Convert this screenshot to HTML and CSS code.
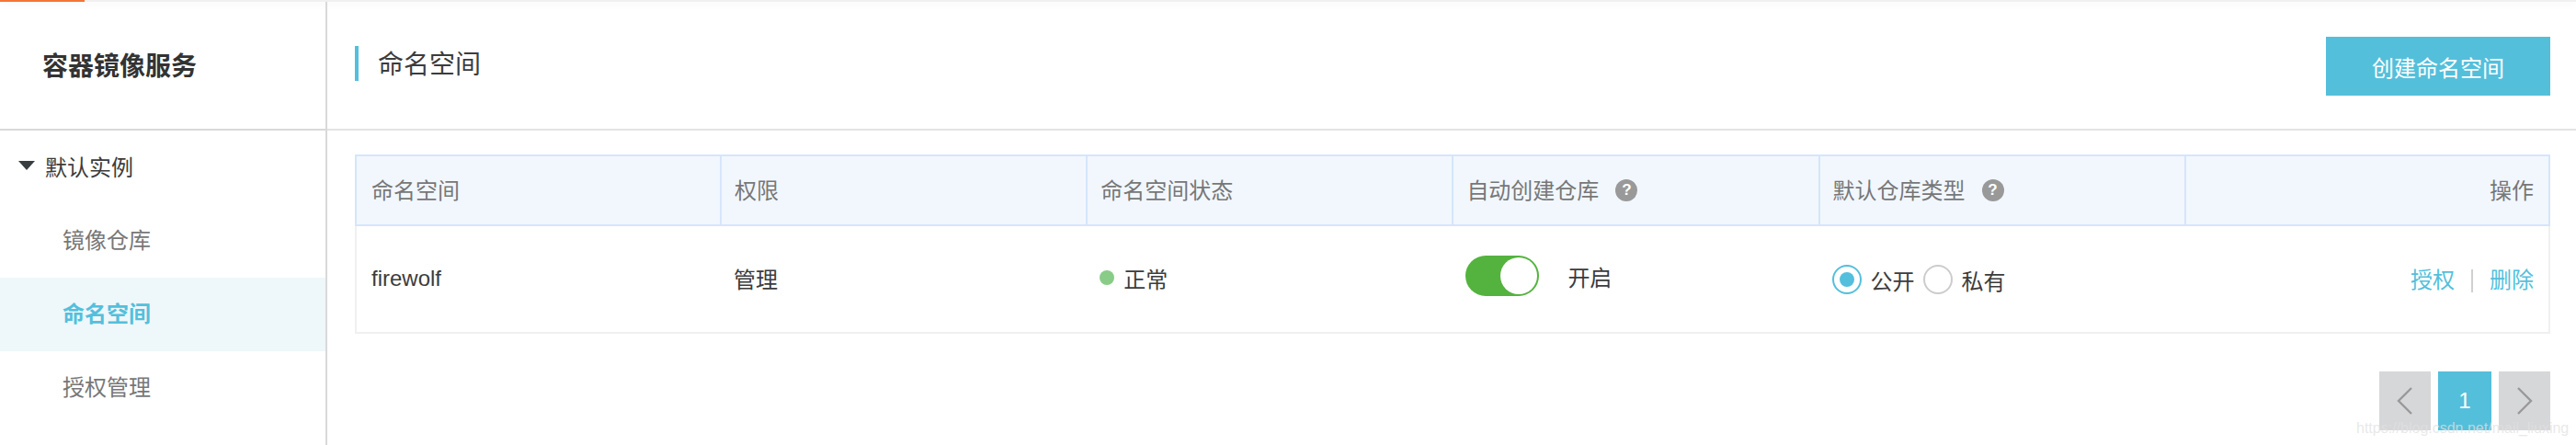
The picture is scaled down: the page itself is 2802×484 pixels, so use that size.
FILE: index.html
```html
<!DOCTYPE html>
<html lang="zh-CN">
<head>
<meta charset="UTF-8" />
<title>容器镜像服务 - 命名空间</title>
<link rel="stylesheet" href="styles.css">
</head>
<body>

<div class="top-strip"><div class="top-progress"></div></div>

<div class="layout">
  <aside class="sidebar">
    <div class="sidebar-title">容器镜像服务</div>
    <div class="sidebar-group"><span class="caret"></span>默认实例</div>
    <a class="sidebar-item">镜像仓库</a>
    <a class="sidebar-item active">命名空间</a>
    <a class="sidebar-item">授权管理</a>
  </aside>

  <main class="main">
    <header class="page-head">
      <h1 class="page-title">命名空间</h1>
      <button class="btn-create">创建命名空间</button>
    </header>

    <section class="content">
      <table class="ns-table">
        <thead>
          <tr>
            <th>命名空间</th>
            <th>权限</th>
            <th>命名空间状态</th>
            <th>自动创建仓库<span class="help">?</span></th>
            <th>默认仓库类型<span class="help">?</span></th>
            <th class="right">操作</th>
          </tr>
        </thead>
        <tbody>
          <tr>
            <td>firewolf</td>
            <td>管理</td>
            <td><span class="status"><span class="status-dot"></span>正常</span></td>
            <td>
              <span class="switch-wrap">
                <span class="switch"><span class="switch-knob"></span></span>
                开启
              </span>
            </td>
            <td>
              <span class="radios">
                <span class="radio checked"></span><span class="radio-label">公开</span>
                <span class="radio"></span><span class="radio-label">私有</span>
              </span>
            </td>
            <td class="right">
              <a class="link">授权</a><span class="sep"></span><a class="link">删除</a>
            </td>
          </tr>
        </tbody>
      </table>

      <div class="pager">
        <button class="page-btn">
          <svg width="18" height="32" viewBox="0 0 18 32"><path d="M16 2 2 16l14 14" fill="none" stroke="#999" stroke-width="2.4"/></svg>
        </button>
        <button class="page-btn current">1</button>
        <button class="page-btn">
          <svg width="18" height="32" viewBox="0 0 18 32"><path d="M2 2l14 14L2 30" fill="none" stroke="#999" stroke-width="2.4"/></svg>
        </button>
      </div>
    </section>
  </main>
</div>

<div class="watermark">https://blog.csdn.net/mail_liuxing</div>

</body>
</html>
```

FILE: styles.css
```css
* {
  box-sizing: border-box;
}
html, body {
  margin: 0;
  padding: 0;
  height: 484px;
  overflow: hidden;
  background: #fff;
  color: #333;
  font-family: "Liberation Sans", "Noto Sans CJK SC", sans-serif;
  font-size: 24px;
}
.top-strip {
  height: 2px;
  background: #f0f0f0;
  box-shadow: 0 2px 8px rgba(0,0,0,0.08);
}
.top-progress {
  width: 92px;
  height: 2px;
  background: #f47536;
}
.layout {
  display: flex;
  height: 482px;
}

/* sidebar */
.sidebar {
  width: 356px;
  flex: none;
  border-right: 2px solid #d9d9d9;
}
.sidebar-title {
  height: 140px;
  padding-left: 46px;
  line-height: 142px;
  font-size: 28px;
  font-weight: 700;
  color: #333;
  border-bottom: 2px solid #d9d9d9;
}
.sidebar-group {
  display: flex;
  align-items: center;
  height: 80px;
  padding-left: 20px;
  padding-bottom: 4px;
  color: #3c3c3c;
}
.caret {
  width: 0;
  height: 0;
  margin-right: 11px;
  border-left: 9.5px solid transparent;
  border-right: 9.5px solid transparent;
  border-top: 10px solid #373d41;
}
.sidebar-item {
  display: block;
  height: 80px;
  padding-left: 68px;
  line-height: 80px;
  color: #777;
}
.sidebar-item.active {
  background: #eef7fa;
  color: #54bfdc;
  font-weight: 700;
}

/* page head */
.main {
  flex: 1;
  min-width: 0;
}
.page-head {
  display: flex;
  align-items: flex-start;
  justify-content: space-between;
  height: 140px;
  padding: 38px 28px 0 30px;
  border-bottom: 2px solid #e3e3e3;
}
.page-title {
  height: 38px;
  margin: 10px 0 0;
  padding-left: 21px;
  border-left: 4px solid #54bfdc;
  font-size: 28px;
  font-weight: 400;
  line-height: 41px;
  color: #3c3c3c;
}
.btn-create {
  width: 244px;
  height: 64px;
  border: none;
  background: #54bfdb;
  color: #fff;
  font: inherit;
}

/* table */
.content {
  padding: 26px 28px 0 30px;
}
.ns-table {
  width: 2388px;
  table-layout: fixed;
  border-collapse: separate;
  border-spacing: 0;
}
.ns-table th {
  height: 78px;
  padding: 0 14px 4px;
  background: #f2f7fe;
  border-top: 2px solid #d5e5fb;
  border-bottom: 2px solid #d5e5fb;
  border-left: 2px solid #d5e5fb;
  font-weight: 400;
  color: #777;
  text-align: left;
}
.ns-table th:first-child {
  width: 397px;
  padding-left: 16px;
}
.ns-table th:last-child {
  border-right: 2px solid #d5e5fb;
}
.ns-table td {
  height: 117px;
  padding: 0 15px 3px;
  border-bottom: 2px solid #f0f0f0;
  color: #3c3c3c;
}
.ns-table td:first-child {
  padding-left: 16px;
  padding-bottom: 1px;
  border-left: 2px solid #f0f0f0;
}
.ns-table td:last-child {
  border-right: 2px solid #f0f0f0;
}
.ns-table .right {
  padding-right: 16px;
  text-align: right;
}
.help {
  display: inline-block;
  width: 24px;
  height: 24px;
  margin-left: 18px;
  border-radius: 50%;
  background: #999;
  color: #fff;
  font-size: 17px;
  font-weight: 700;
  line-height: 24px;
  text-align: center;
  vertical-align: 4px;
}
.status {
  display: inline-flex;
  align-items: center;
}
.status-dot {
  width: 16px;
  height: 16px;
  margin-right: 10px;
  border-radius: 50%;
  background: #88cc88;
}
.switch-wrap {
  display: inline-flex;
  align-items: center;
  gap: 31px;
}
.switch {
  display: flex;
  justify-content: flex-end;
  align-items: center;
  width: 80px;
  height: 44px;
  padding-right: 2px;
  border-radius: 22px;
  background: #54b33e;
}
.switch-knob {
  width: 40px;
  height: 40px;
  border-radius: 50%;
  background: #fff;
}
.radios {
  display: inline-flex;
  align-items: center;
  margin-top: 4px;
}
.radio {
  display: flex;
  align-items: center;
  justify-content: center;
  width: 32px;
  height: 32px;
  border: 2px solid #ccc;
  border-radius: 50%;
  background: #fff;
}
.radio.checked {
  border-color: #54bfdc;
}
.radio.checked::after {
  content: "";
  width: 16px;
  height: 16px;
  border-radius: 50%;
  background: #54bfdc;
}
.radio-label {
  margin: 0 9px 0 10px;
}
.link {
  color: #54bfdc;
}
.sep {
  display: inline-block;
  width: 2px;
  height: 25px;
  margin: 0 18px;
  background: #d0d0d0;
  vertical-align: -5px;
}

/* pager */
.pager {
  display: flex;
  justify-content: flex-end;
  gap: 8px;
  margin-top: 41px;
}
.page-btn {
  display: flex;
  align-items: center;
  justify-content: center;
  width: 56px;
  height: 64px;
  padding: 0;
  border: none;
  background: #d6d7d9;
  color: #fff;
  font: inherit;
}
.page-btn.current {
  width: 58px;
  background: #54bfdb;
}

.watermark {
  position: absolute;
  left: 2563px;
  top: 457px;
  font-size: 16px;
  color: rgba(225,225,225,0.75);
  white-space: nowrap;
}
```
